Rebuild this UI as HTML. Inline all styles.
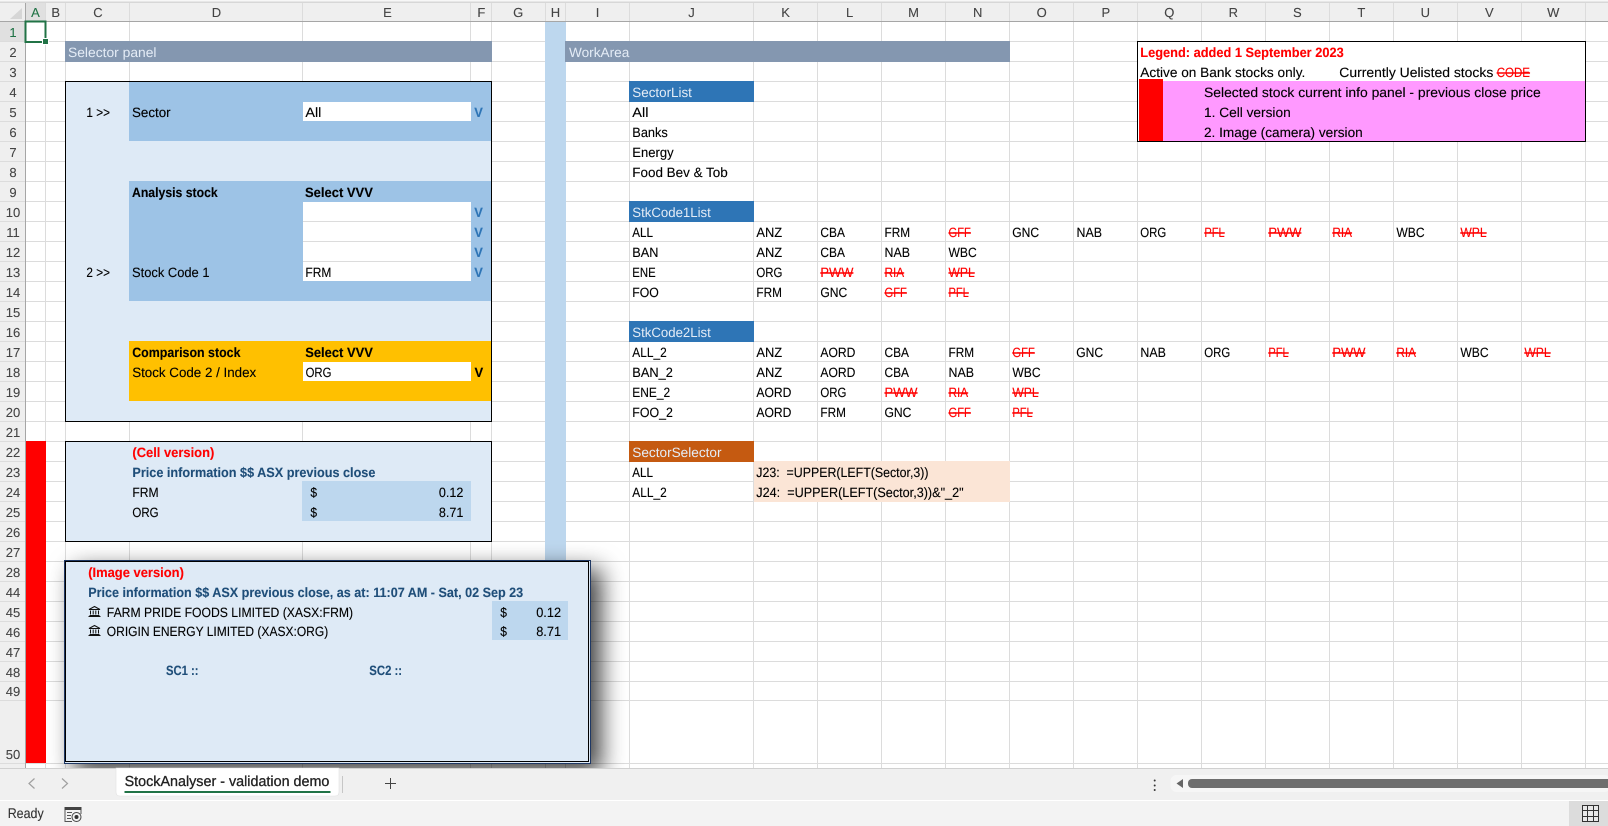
<!DOCTYPE html>
<html><head><meta charset="utf-8"><title>StockAnalyser</title>
<style>
html,body{margin:0;padding:0;background:#fff;overflow:hidden}
svg{display:block;position:absolute;left:0;top:0}
text{font-family:"Liberation Sans",sans-serif;font-size:13.5px;fill:#000;stroke:#000;stroke-width:.12;text-rendering:geometricPrecision}
.b{font-weight:bold}
.r{fill:#f00;stroke:#f00}
.bl{fill:#2e75b6;stroke:#2e75b6;font-weight:bold}
.d{fill:#1f4e79;stroke:#1f4e79;font-weight:bold}
.w{fill:#e4ecf6;stroke:none}
.s{fill:#f00;stroke:#f00;text-decoration:line-through}
.h{fill:#444;stroke:#444;stroke-width:.1;font-size:13px;text-anchor:middle}
</style></head><body>
<svg width="1608" height="826" viewBox="0 0 1608 826" xmlns="http://www.w3.org/2000/svg">
<defs><linearGradient id="top" x1="0" y1="0" x2="0" y2="1"><stop offset="0" stop-color="#fff"/><stop offset="1" stop-color="#cfcfcf"/></linearGradient></defs>
<rect width="1608" height="826" fill="#fff"/>
<!-- headers -->
<rect x="0" y="3" width="1608" height="19" fill="#efefef"/>
<rect x="0" y="22" width="25" height="746" fill="#efefef"/>
<rect x="0" y="0" width="1608" height="3" fill="url(#top)"/>
<rect x="26" y="3" width="20" height="18" fill="#e0e0e0"/>
<rect x="0" y="22" width="25" height="20" fill="#e0e0e0"/>
<polygon points="22,8 22,19 10,19" fill="#d6d6d6"/>
<!-- grid -->
<path shape-rendering="crispEdges" stroke="#dcdcdc" stroke-width="1" fill="none" d="M0 41.5H1608M0 61.5H1608M0 81.5H1608M0 101.5H1608M0 121.5H1608M0 141.5H1608M0 161.5H1608M0 181.5H1608M0 201.5H1608M0 221.5H1608M0 241.5H1608M0 261.5H1608M0 281.5H1608M0 301.5H1608M0 321.5H1608M0 341.5H1608M0 361.5H1608M0 381.5H1608M0 401.5H1608M0 421.5H1608M0 441.5H1608M0 461.5H1608M0 481.5H1608M0 501.5H1608M0 521.5H1608M0 541.5H1608M0 561.5H1608M0 581.5H1608M0 601.5H1608M0 621.5H1608M0 641.5H1608M0 661.5H1608M0 681.5H1608M0 700.5H1608M0 763.5H1608
M45.5 3V768M65.5 3V768M129.5 3V768M302.5 3V768M470.5 3V768M491.5 3V768M545.5 3V768M565.5 3V768M629.5 3V768M753.5 3V768M817.5 3V768M881.5 3V768M945.5 3V768M1009.5 3V768M1073.5 3V768M1137.5 3V768M1201.5 3V768M1265.5 3V768M1329.5 3V768M1393.5 3V768M1457.5 3V768M1521.5 3V768M1585.5 3V768"/>
<path shape-rendering="crispEdges" stroke="#a6a6a6" stroke-width="1" fill="none" d="M0 21.5H1608M25.5 3V768"/>
<!-- col letters -->
<text class="h" x="35.5" y="17" style="fill:#217346;stroke:#217346">A</text><text class="h" x="55.7" y="17">B</text><text class="h" x="98" y="17">C</text><text class="h" x="216.4" y="17">D</text><text class="h" x="387.5" y="17">E</text><text class="h" x="481.4" y="17">F</text><text class="h" x="518.2" y="17">G</text><text class="h" x="555.5" y="17">H</text><text class="h" x="597.5" y="17">I</text><text class="h" x="691.5" y="17">J</text><text class="h" x="785.6" y="17">K</text><text class="h" x="849.6" y="17">L</text><text class="h" x="913.6" y="17">M</text><text class="h" x="977.7" y="17">N</text><text class="h" x="1041.7" y="17">O</text><text class="h" x="1105.8" y="17">P</text><text class="h" x="1169.3" y="17">Q</text><text class="h" x="1233.3" y="17">R</text><text class="h" x="1297.3" y="17">S</text><text class="h" x="1361.3" y="17">T</text><text class="h" x="1425.3" y="17">U</text><text class="h" x="1489.3" y="17">V</text><text class="h" x="1553.3" y="17">W</text>
<!-- row numbers -->
<text class="h" x="13" y="37" style="fill:#217346;stroke:#217346">1</text><text class="h" x="13" y="57">2</text><text class="h" x="13" y="77">3</text><text class="h" x="13" y="97">4</text><text class="h" x="13" y="117">5</text><text class="h" x="13" y="137">6</text><text class="h" x="13" y="157">7</text><text class="h" x="13" y="177">8</text><text class="h" x="13" y="197">9</text><text class="h" x="13" y="217">10</text><text class="h" x="13" y="237">11</text><text class="h" x="13" y="257">12</text><text class="h" x="13" y="277">13</text><text class="h" x="13" y="297">14</text><text class="h" x="13" y="317">15</text><text class="h" x="13" y="337">16</text><text class="h" x="13" y="357">17</text><text class="h" x="13" y="377">18</text><text class="h" x="13" y="397">19</text><text class="h" x="13" y="417">20</text><text class="h" x="13" y="437">21</text><text class="h" x="13" y="457">22</text><text class="h" x="13" y="477">23</text><text class="h" x="13" y="497">24</text><text class="h" x="13" y="517">25</text><text class="h" x="13" y="537">26</text><text class="h" x="13" y="557">27</text><text class="h" x="13" y="577">28</text><text class="h" x="13" y="597">44</text><text class="h" x="13" y="617">45</text><text class="h" x="13" y="637">46</text><text class="h" x="13" y="657">47</text><text class="h" x="13" y="677">48</text><text class="h" x="13" y="696">49</text><text class="h" x="13" y="759">50</text>
<!-- H column, red column A -->
<rect x="545" y="22" width="21" height="540" fill="#bdd7ee"/>
<rect x="26" y="441" width="20" height="322" fill="#f00"/>
<!-- Title bars -->
<rect x="65" y="41" width="427" height="21" fill="#8497b0"/>
<text class="w" x="68" y="57" textLength="88.5" lengthAdjust="spacingAndGlyphs">Selector panel</text>
<rect x="565" y="41" width="445" height="21" fill="#8497b0"/>
<text class="w" x="569" y="57" textLength="60.3" lengthAdjust="spacingAndGlyphs">WorkArea</text>
<!-- Selector panel -->
<rect x="65.5" y="81.5" width="426" height="340" fill="#deeaf6" stroke="#000"/>
<rect x="129" y="82" width="362" height="59" fill="#9dc3e6"/>
<rect x="303" y="102" width="168" height="19" fill="#fff"/>
<rect x="129" y="181" width="362" height="120" fill="#9dc3e6"/>
<rect x="303" y="202" width="168" height="79" fill="#fff"/>
<path shape-rendering="crispEdges" stroke="#dcdcdc" d="M303 221.5H471M303 241.5H471M303 261.5H471"/>
<rect x="129" y="341" width="362" height="60" fill="#ffc000"/>
<rect x="303" y="362" width="168" height="19" fill="#fff"/>
<text x="86.4" y="117" textLength="23.6" lengthAdjust="spacingAndGlyphs">1 &gt;&gt;</text>
<text x="132" y="117" textLength="38.6" lengthAdjust="spacingAndGlyphs">Sector</text>
<text x="305.4" y="117" textLength="16" lengthAdjust="spacingAndGlyphs">All</text>
<text class="bl" x="474.3" y="117" textLength="8.6" lengthAdjust="spacingAndGlyphs">V</text>
<text class="b" x="132" y="197" textLength="85.7" lengthAdjust="spacingAndGlyphs">Analysis stock</text>
<text class="b" x="305" y="197" textLength="67.9" lengthAdjust="spacingAndGlyphs">Select VVV</text>
<text class="bl" x="474.3" y="217" textLength="8.6" lengthAdjust="spacingAndGlyphs">V</text>
<text class="bl" x="474.3" y="237" textLength="8.6" lengthAdjust="spacingAndGlyphs">V</text>
<text class="bl" x="474.3" y="257" textLength="8.6" lengthAdjust="spacingAndGlyphs">V</text>
<text class="bl" x="474.3" y="277" textLength="8.6" lengthAdjust="spacingAndGlyphs">V</text>
<text x="86.4" y="277" textLength="23.6" lengthAdjust="spacingAndGlyphs">2 &gt;&gt;</text>
<text x="132" y="277" textLength="77.5" lengthAdjust="spacingAndGlyphs">Stock Code 1</text>
<text x="305.4" y="277" textLength="26" lengthAdjust="spacingAndGlyphs">FRM</text>
<text class="b" x="132.2" y="357" textLength="108.3" lengthAdjust="spacingAndGlyphs">Comparison stock</text>
<text class="b" x="305.2" y="357" textLength="67.7" lengthAdjust="spacingAndGlyphs">Select VVV</text>
<text x="132.2" y="377" textLength="124" lengthAdjust="spacingAndGlyphs">Stock Code 2 / Index</text>
<text x="305.6" y="377" textLength="25.8" lengthAdjust="spacingAndGlyphs">ORG</text>
<text class="b" x="474.5" y="377" textLength="8.7" lengthAdjust="spacingAndGlyphs">V</text>
<!-- Cell version -->
<rect x="65.5" y="441.5" width="426" height="100" fill="#deeaf6" stroke="#000"/>
<rect x="302" y="481" width="169" height="40" fill="#bdd7ee"/>
<text class="b r" x="132.4" y="457" textLength="81.9" lengthAdjust="spacingAndGlyphs">(Cell version)</text>
<text class="d" x="132.4" y="477" textLength="243" lengthAdjust="spacingAndGlyphs">Price information $$ ASX previous close</text>
<text x="132.4" y="497" textLength="26.2" lengthAdjust="spacingAndGlyphs">FRM</text>
<text x="132.4" y="517" textLength="26.2" lengthAdjust="spacingAndGlyphs">ORG</text>
<text x="310.4" y="497" textLength="6.7" lengthAdjust="spacingAndGlyphs">$</text>
<text x="310.4" y="517" textLength="6.7" lengthAdjust="spacingAndGlyphs">$</text>
<text x="438.9" y="497" textLength="24.5" lengthAdjust="spacingAndGlyphs">0.12</text>
<text x="438.9" y="517" textLength="24.5" lengthAdjust="spacingAndGlyphs">8.71</text>
<!-- Legend -->
<rect x="1137.5" y="41.5" width="448" height="100" fill="#fff" stroke="#000"/>
<rect x="1163" y="81" width="422" height="60" fill="#f9f"/>
<rect x="1139" y="79" width="24" height="62" fill="#f00"/>
<text class="b r" x="1140.3" y="57" textLength="203.4" lengthAdjust="spacingAndGlyphs">Legend: added 1 September 2023</text>
<text x="1140.3" y="77" textLength="165" lengthAdjust="spacingAndGlyphs">Active on Bank stocks only.</text>
<text x="1339.3" y="77" textLength="154" lengthAdjust="spacingAndGlyphs">Currently Uelisted stocks</text>
<text class="s" x="1496.7" y="77" textLength="33.3" lengthAdjust="spacingAndGlyphs">CODE</text>
<text x="1204" y="97" textLength="336.7" lengthAdjust="spacingAndGlyphs">Selected stock current info panel - previous close price</text>
<text x="1204" y="117" textLength="86.7" lengthAdjust="spacingAndGlyphs">1. Cell version</text>
<text x="1204" y="137" textLength="158.7" lengthAdjust="spacingAndGlyphs">2. Image (camera) version</text>
<!-- SectorList -->
<rect x="629" y="81" width="125" height="21" fill="#2e75b6"/>
<text class="w" x="632.3" y="97" textLength="59.6" lengthAdjust="spacingAndGlyphs">SectorList</text>
<text x="632.3" y="117" textLength="16.2" lengthAdjust="spacingAndGlyphs">All</text>
<text x="632.3" y="137" textLength="35.5" lengthAdjust="spacingAndGlyphs">Banks</text>
<text x="632.3" y="157" textLength="41.3" lengthAdjust="spacingAndGlyphs">Energy</text>
<text x="632.3" y="177" textLength="95.4" lengthAdjust="spacingAndGlyphs">Food Bev &amp; Tob</text>
<!-- StkCode1List -->
<rect x="629" y="201" width="125" height="21" fill="#2e75b6"/>
<text class="w" x="632.3" y="217" textLength="78.5" lengthAdjust="spacingAndGlyphs">StkCode1List</text>
<text x="632.3" y="237" textLength="20.7" lengthAdjust="spacingAndGlyphs">ALL</text>
<text x="756.4" y="237" textLength="25.8" lengthAdjust="spacingAndGlyphs">ANZ</text>
<text x="820.4" y="237" textLength="24.5" lengthAdjust="spacingAndGlyphs">CBA</text>
<text x="884.5" y="237" textLength="25.5" lengthAdjust="spacingAndGlyphs">FRM</text>
<text class="s" x="948.5" y="237" textLength="22.4" lengthAdjust="spacingAndGlyphs">GFF</text>
<text x="1012.2" y="237" textLength="26.9" lengthAdjust="spacingAndGlyphs">GNC</text>
<text x="1076.5" y="237" textLength="25.5" lengthAdjust="spacingAndGlyphs">NAB</text>
<text x="1140.3" y="237" textLength="26" lengthAdjust="spacingAndGlyphs">ORG</text>
<text class="s" x="1204.4" y="237" textLength="20.3" lengthAdjust="spacingAndGlyphs">PFL</text>
<text class="s" x="1268.4" y="237" textLength="33" lengthAdjust="spacingAndGlyphs">PWW</text>
<text class="s" x="1332.4" y="237" textLength="19.6" lengthAdjust="spacingAndGlyphs">RIA</text>
<text x="1396.4" y="237" textLength="28.2" lengthAdjust="spacingAndGlyphs">WBC</text>
<text class="s" x="1460.4" y="237" textLength="26.2" lengthAdjust="spacingAndGlyphs">WPL</text>
<text x="632.3" y="257" textLength="26.2" lengthAdjust="spacingAndGlyphs">BAN</text>
<text x="756.4" y="257" textLength="25.8" lengthAdjust="spacingAndGlyphs">ANZ</text>
<text x="820.4" y="257" textLength="24.5" lengthAdjust="spacingAndGlyphs">CBA</text>
<text x="884.5" y="257" textLength="25.5" lengthAdjust="spacingAndGlyphs">NAB</text>
<text x="948.5" y="257" textLength="28.2" lengthAdjust="spacingAndGlyphs">WBC</text>
<text x="632.3" y="277" textLength="23.4" lengthAdjust="spacingAndGlyphs">ENE</text>
<text x="756.4" y="277" textLength="26" lengthAdjust="spacingAndGlyphs">ORG</text>
<text class="s" x="820.4" y="277" textLength="33" lengthAdjust="spacingAndGlyphs">PWW</text>
<text class="s" x="884.5" y="277" textLength="19.6" lengthAdjust="spacingAndGlyphs">RIA</text>
<text class="s" x="948.5" y="277" textLength="26.2" lengthAdjust="spacingAndGlyphs">WPL</text>
<text x="632.3" y="297" textLength="26.5" lengthAdjust="spacingAndGlyphs">FOO</text>
<text x="756.4" y="297" textLength="25.5" lengthAdjust="spacingAndGlyphs">FRM</text>
<text x="820.4" y="297" textLength="26.9" lengthAdjust="spacingAndGlyphs">GNC</text>
<text class="s" x="884.5" y="297" textLength="22.4" lengthAdjust="spacingAndGlyphs">GFF</text>
<text class="s" x="948.5" y="297" textLength="20.3" lengthAdjust="spacingAndGlyphs">PFL</text>
<!-- StkCode2List -->
<rect x="629" y="321" width="125" height="21" fill="#2e75b6"/>
<text class="w" x="632.3" y="337" textLength="78.5" lengthAdjust="spacingAndGlyphs">StkCode2List</text>
<text x="632.3" y="357" textLength="34.4" lengthAdjust="spacingAndGlyphs">ALL_2</text>
<text x="756.4" y="357" textLength="25.8" lengthAdjust="spacingAndGlyphs">ANZ</text>
<text x="820.4" y="357" textLength="35" lengthAdjust="spacingAndGlyphs">AORD</text>
<text x="884.5" y="357" textLength="24.5" lengthAdjust="spacingAndGlyphs">CBA</text>
<text x="948.5" y="357" textLength="25.5" lengthAdjust="spacingAndGlyphs">FRM</text>
<text class="s" x="1012.4" y="357" textLength="22.4" lengthAdjust="spacingAndGlyphs">GFF</text>
<text x="1076.2" y="357" textLength="26.9" lengthAdjust="spacingAndGlyphs">GNC</text>
<text x="1140.4" y="357" textLength="25.5" lengthAdjust="spacingAndGlyphs">NAB</text>
<text x="1204.3" y="357" textLength="26" lengthAdjust="spacingAndGlyphs">ORG</text>
<text class="s" x="1268.4" y="357" textLength="20.3" lengthAdjust="spacingAndGlyphs">PFL</text>
<text class="s" x="1332.4" y="357" textLength="33" lengthAdjust="spacingAndGlyphs">PWW</text>
<text class="s" x="1396.4" y="357" textLength="19.6" lengthAdjust="spacingAndGlyphs">RIA</text>
<text x="1460.4" y="357" textLength="28.2" lengthAdjust="spacingAndGlyphs">WBC</text>
<text class="s" x="1524.4" y="357" textLength="26.2" lengthAdjust="spacingAndGlyphs">WPL</text>
<text x="632.3" y="377" textLength="40.6" lengthAdjust="spacingAndGlyphs">BAN_2</text>
<text x="756.4" y="377" textLength="25.8" lengthAdjust="spacingAndGlyphs">ANZ</text>
<text x="820.4" y="377" textLength="35" lengthAdjust="spacingAndGlyphs">AORD</text>
<text x="884.5" y="377" textLength="24.5" lengthAdjust="spacingAndGlyphs">CBA</text>
<text x="948.5" y="377" textLength="25.5" lengthAdjust="spacingAndGlyphs">NAB</text>
<text x="1012.4" y="377" textLength="28.2" lengthAdjust="spacingAndGlyphs">WBC</text>
<text x="632.3" y="397" textLength="37.9" lengthAdjust="spacingAndGlyphs">ENE_2</text>
<text x="756.4" y="397" textLength="35" lengthAdjust="spacingAndGlyphs">AORD</text>
<text x="820.4" y="397" textLength="26" lengthAdjust="spacingAndGlyphs">ORG</text>
<text class="s" x="884.5" y="397" textLength="33" lengthAdjust="spacingAndGlyphs">PWW</text>
<text class="s" x="948.5" y="397" textLength="19.6" lengthAdjust="spacingAndGlyphs">RIA</text>
<text class="s" x="1012.4" y="397" textLength="26.2" lengthAdjust="spacingAndGlyphs">WPL</text>
<text x="632.3" y="417" textLength="40.6" lengthAdjust="spacingAndGlyphs">FOO_2</text>
<text x="756.4" y="417" textLength="35" lengthAdjust="spacingAndGlyphs">AORD</text>
<text x="820.4" y="417" textLength="25.5" lengthAdjust="spacingAndGlyphs">FRM</text>
<text x="884.5" y="417" textLength="26.9" lengthAdjust="spacingAndGlyphs">GNC</text>
<text class="s" x="948.5" y="417" textLength="22.4" lengthAdjust="spacingAndGlyphs">GFF</text>
<text class="s" x="1012.4" y="417" textLength="20.3" lengthAdjust="spacingAndGlyphs">PFL</text>
<!-- SectorSelector -->
<rect x="629" y="441" width="125" height="21" fill="#c55a11"/>
<rect x="754" y="461" width="256" height="41" fill="#fbe5d6"/>
<text class="w" x="632.3" y="457" textLength="89.2" lengthAdjust="spacingAndGlyphs">SectorSelector</text>
<text x="632.3" y="477" textLength="20.7" lengthAdjust="spacingAndGlyphs">ALL</text>
<text x="632.3" y="497" textLength="34.4" lengthAdjust="spacingAndGlyphs">ALL_2</text>
<text x="756.3" y="477" textLength="172.2" lengthAdjust="spacingAndGlyphs" xml:space="preserve">J23:  =UPPER(LEFT(Sector,3))</text>
<text x="756.3" y="497" textLength="207.3" lengthAdjust="spacingAndGlyphs" xml:space="preserve">J24:  =UPPER(LEFT(Sector,3))&amp;"_2"</text>
<!-- Image panel -->
<rect x="64.5" y="560.5" width="526" height="203" fill="#deeaf6" stroke="#1f3864" stroke-width="1" style="filter:drop-shadow(10px 9px 12px rgba(0,0,0,.75))"/>
<rect x="65.5" y="561.5" width="523" height="200" fill="#deeaf6" stroke="#000" stroke-width="1"/>
<rect x="492" y="601" width="76" height="39" fill="#bdd7ee"/>
<text class="b r" x="88.2" y="577" textLength="95.7" lengthAdjust="spacingAndGlyphs">(Image version)</text>
<text class="d" x="88.2" y="597" textLength="435" lengthAdjust="spacingAndGlyphs">Price information $$ ASX previous close, as at: 11:07 AM - Sat, 02 Sep 23</text>
<path fill="none" stroke="#111" stroke-width="1" d="M89 609.5L94.5 606.5L100 609.5ZM90.5 610.5V614.5M93.2 610.5V614.5M95.8 610.5V614.5M98.5 610.5V614.5M89.5 615.5H99.5M88.5 616.5H100.5"/>
<path fill="none" stroke="#111" stroke-width="1" d="M89 628.5L94.5 625.5L100 628.5ZM90.5 629.5V633.5M93.2 629.5V633.5M95.8 629.5V633.5M98.5 629.5V633.5M89.5 634.5H99.5M88.5 635.5H100.5"/>
<text x="106.8" y="617" textLength="246.3" lengthAdjust="spacingAndGlyphs">FARM PRIDE FOODS LIMITED (XASX:FRM)</text>
<text x="106.8" y="636" textLength="221.4" lengthAdjust="spacingAndGlyphs">ORIGIN ENERGY LIMITED (XASX:ORG)</text>
<text x="500.2" y="617" textLength="6.7" lengthAdjust="spacingAndGlyphs">$</text>
<text x="500.2" y="636" textLength="6.7" lengthAdjust="spacingAndGlyphs">$</text>
<text x="536.2" y="617" textLength="24.9" lengthAdjust="spacingAndGlyphs">0.12</text>
<text x="536.2" y="636" textLength="24.9" lengthAdjust="spacingAndGlyphs">8.71</text>
<text class="d" x="166" y="675" textLength="32.5" lengthAdjust="spacingAndGlyphs">SC1 ::</text>
<text class="d" x="369.3" y="675" textLength="32.8" lengthAdjust="spacingAndGlyphs">SC2 ::</text>
<!-- selection -->
<rect x="25.5" y="21.5" width="20" height="20.5" fill="none" stroke="#217346" stroke-width="2"/>
<rect x="42.5" y="38.5" width="6" height="6" fill="#217346" stroke="#fff" stroke-width="1"/>
<!-- Tab bar -->
<rect x="0" y="768" width="1608" height="32" fill="#f0f0f0"/>
<path shape-rendering="crispEdges" stroke="#d0d0d0" d="M0 768.5H1608"/>
<rect x="0" y="800" width="1608" height="1" fill="#fff"/>
<rect x="0" y="801" width="1608" height="25" fill="#f3f3f3"/>
<path d="M116 768H339V792Q339 796 335 796H120Q116 796 116 792Z" fill="#fff" stroke="#e2e2e2" stroke-width=".6"/>
<text x="124.6" y="786" textLength="204.8" lengthAdjust="spacingAndGlyphs" style="font-size:14.5px;fill:#222;stroke:#222;stroke-width:.3">StockAnalyser - validation demo</text>
<rect x="124.5" y="791" width="206" height="2" fill="#217346"/>
<path shape-rendering="crispEdges" stroke="#c6c6c6" d="M342.5 776V793"/>
<path fill="none" stroke="#444" stroke-width="1" d="M390.5 778V789M385 783.5H396"/>
<path fill="none" stroke="#a0a0a0" stroke-width="1.2" d="M34.5 778.5L29 783.5L34.5 788.5M62 778.5L67.5 783.5L62 788.5"/>
<circle cx="1154.7" cy="780.5" r="1" fill="#333"/><circle cx="1154.7" cy="785.5" r="1" fill="#333"/><circle cx="1154.7" cy="790" r="1" fill="#333"/>
<rect x="1170.5" y="775" width="440" height="17" rx="6" fill="#f6f6f6"/>
<polygon points="1183,779 1183,788 1176.5,783.5" fill="#666"/>
<rect x="1188" y="779" width="424" height="9" rx="4" fill="#6e6e6e"/>
<!-- Status bar -->
<text x="7.7" y="818" textLength="36" lengthAdjust="spacingAndGlyphs" style="font-size:14px;fill:#333;stroke:#333">Ready</text>
<path fill="#444" d="M64.5 807H81.5V810H64.5Z"/>
<path fill="none" stroke="#555" stroke-width="1" d="M65 810V821.5H72M81 810V814M67 812.5H72M67 815.5H71M67 818.5H71"/>
<circle cx="76.5" cy="817" r="4.5" fill="#f3f3f3" stroke="#444"/><circle cx="76.5" cy="817" r="2" fill="#333"/>
<rect x="1569" y="801" width="39" height="25" fill="#dcdcdc"/>
<rect x="1582.5" y="805.5" width="16" height="16" fill="#e9e9e9" stroke="#333"/>
<path shape-rendering="crispEdges" stroke="#333" fill="none" d="M1587.5 806V821M1593.5 806V821M1583 810.5H1598M1583 816.5H1598"/>
</svg>
</body></html>
